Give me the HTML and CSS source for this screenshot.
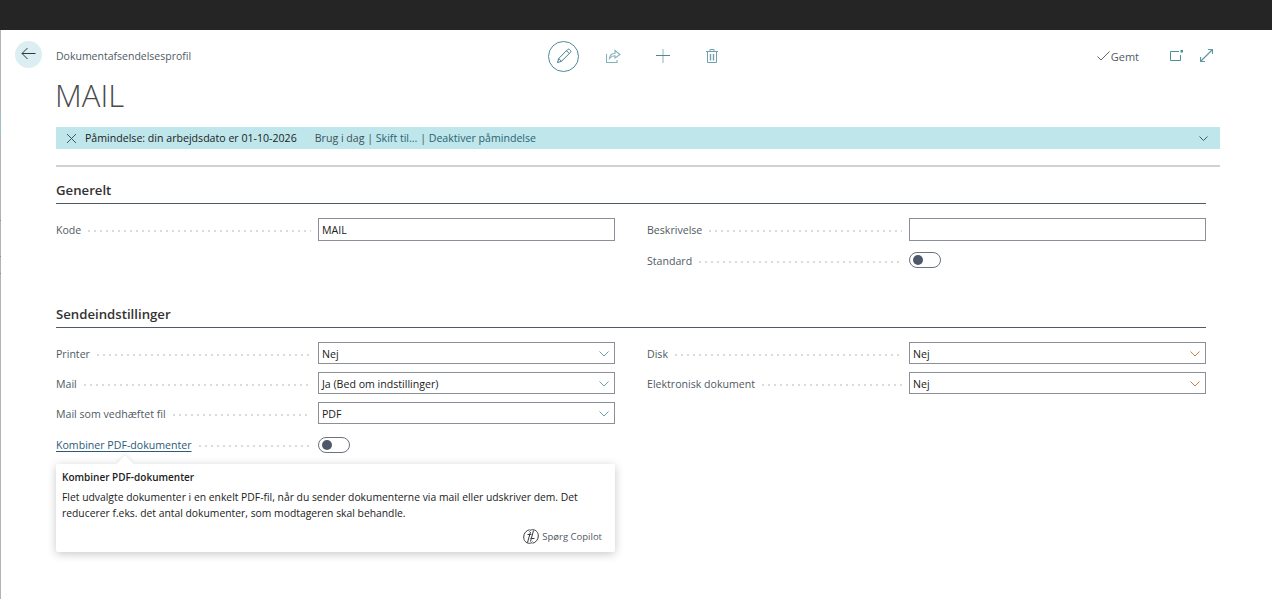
FILE: index.html
```html
<!DOCTYPE html>
<html lang="da">
<head>
    <meta charset="UTF-8">
    <title>Dokumentafsendelsesprofil - MAIL</title>
    <link rel="stylesheet" href="styles.css">
</head>
<body>
    <div class="topbar"></div>
    <div class="page">
        <header class="header">
            <div class="crumb-area">
                <button class="back" aria-label="Tilbage">
                    <svg width="15" height="13" viewBox="0 0 15 13" fill="none" stroke="#2b3a42" stroke-width="1"><path d="M14.500 6.500H1M6.500 1 1 6.500 6.500 12"/></svg>
                </button>
                <span class="crumb">Dokumentafsendelsesprofil</span>
            </div>
            <div class="actions">
                <button class="action action-edit" aria-label="Rediger">
                    <svg width="16" height="16" viewBox="0 0 16 16" fill="none" stroke="#3f7f8c" stroke-width="1"><path d="M1.500 14.500 2.700 10.500 11.600 1.600a1.400 1.400 0 0 1 2 0l.8.8a1.400 1.400 0 0 1 0 2L5.500 13.300z"/><path d="M2.700 10.500 5.500 13.300M10.500 2.700l2.800 2.800"/></svg>
                </button>
                <button class="action" aria-label="Del">
                    <svg width="15" height="14" viewBox="0 0 15 14" fill="none" stroke="#85b2ba" stroke-width="1.100"><path d="M.5 5v8.500h10.500V11"/><path d="M3.500 9.500C3.800 6.500 6 4.500 9 4.500V1.500L14 5.500 9 9V6.800C7 6.800 5 7.500 3.500 9.500z"/></svg>
                </button>
                <button class="action" aria-label="Ny">
                    <svg width="14" height="14" viewBox="0 0 14 14" fill="none" stroke-width="1"><path d="M7 0v14" stroke="#8fb7be"/><path d="M0 6.500h14" stroke="#4f8894"/></svg>
                </button>
                <button class="action" aria-label="Slet">
                    <svg width="12" height="14" viewBox="0 0 12 14" fill="none" stroke="#6fa3ad" stroke-width="1"><path d="M0 2.500h12M4 2.500V.5h4v2M1.500 2.500v11h9v-11"/><path d="M4.500 5v6.500M7.500 5v6.500" stroke-width="1.400"/></svg>
                </button>
            </div>
            <div class="status">
                <span class="saved">
                    <svg width="13" height="10" viewBox="0 0 13 10" fill="none" stroke="#5c6670" stroke-width="1"><path d="M.5 5.500 4 9 12.500.5"/></svg>
                    Gemt
                </span>
                <svg class="open-icon" width="13" height="11" viewBox="0 0 13 11" fill="none" stroke="#4f8f9b" stroke-width="1"><path d="M9 1.500H.5v9h10V5"/><path d="M10.500 0h2.500v2.500h-2.500z" fill="#4f8f9b" stroke="none"/></svg>
                <svg class="expand-icon" width="13" height="13" viewBox="0 0 13 13" fill="none" stroke="#5b98a4" stroke-width="1.200"><path d="M.5 12.500 12.500.5M8 .5h4.500V5M.5 8v4.500H5"/></svg>
            </div>
        </header>

        <h1 class="title">MAIL</h1>

        <div class="banner">
            <svg class="banner-close" width="9" height="9" viewBox="0 0 9 9" fill="none" stroke="#3e5a62" stroke-width="1"><path d="M0 0l9 9M9 0 0 9"/></svg>
            <span class="banner-text">Påmindelse: din arbejdsdato er 01-10-2026</span>
            <span class="banner-links">Brug i dag | <a>Skift til...</a> | <a>Deaktiver påmindelse</a></span>
            <svg class="banner-chevron" width="9" height="5" viewBox="0 0 9 5" fill="none" stroke="#3e5a62" stroke-width="1"><path d="M.5.500l4 4 4-4"/></svg>
        </div>
        <div class="divider"></div>

        <main class="form">
            <section class="section section-general">
                <h2 class="section-title">Generelt</h2>
                <div class="columns">
                    <div class="column">
                        <div class="field field-tall">
                            <label class="label"><span>Kode</span></label>
                            <div class="input">MAIL</div>
                        </div>
                    </div>
                    <div class="column">
                        <div class="field field-tall">
                            <label class="label"><span>Beskrivelse</span></label>
                            <div class="input"></div>
                        </div>
                        <div class="field">
                            <label class="label"><span>Standard</span></label>
                            <div class="toggle"><i></i></div>
                        </div>
                    </div>
                </div>
            </section>

            <section class="section">
                <h2 class="section-title">Sendeindstillinger</h2>
                <div class="columns">
                    <div class="column">
                        <div class="field">
                            <label class="label"><span>Printer</span></label>
                            <div class="input select">Nej<svg class="chevron" width="10" height="6" viewBox="0 0 10 6" fill="none" stroke-width="1"><path d="M.5.500 5 5 9.500.5"/></svg></div>
                        </div>
                        <div class="field">
                            <label class="label"><span>Mail</span></label>
                            <div class="input select">Ja (Bed om indstillinger)<svg class="chevron" width="10" height="6" viewBox="0 0 10 6" fill="none" stroke-width="1"><path d="M.5.500 5 5 9.500.5"/></svg></div>
                        </div>
                        <div class="field">
                            <label class="label"><span>Mail som vedhæftet fil</span></label>
                            <div class="input select">PDF<svg class="chevron" width="10" height="6" viewBox="0 0 10 6" fill="none" stroke-width="1"><path d="M.5.500 5 5 9.500.5"/></svg></div>
                        </div>
                        <div class="field field-popup">
                            <label class="label"><span class="label-link">Kombiner PDF-dokumenter</span></label>
                            <div class="toggle"><i></i></div>
                            <div class="popup">
                                <h3 class="popup-title">Kombiner PDF-dokumenter</h3>
                                <p class="popup-text">Flet udvalgte dokumenter i en enkelt PDF-fil, når du sender dokumenterne via mail eller udskriver dem. Det reducerer f.eks. det antal dokumenter, som modtageren skal behandle.</p>
                                <div class="popup-foot">
                                    <svg width="16" height="15" viewBox="0 0 16 15" fill="none" stroke="#3a3a3a" stroke-width="1"><path d="M6.500 2.500C7 1.200 8 .7 9.500.7c3.500 0 5.800 2.600 5.800 6.300 0 3.800-2.500 6.500-5.800 7.300"/><path d="M9.500 12.500C9 13.800 8 14.300 6.500 14.300 3 14.300.7 11.700.7 8 .7 4.200 3.200 1.500 6.500.7"/><path d="M10.500 1.500 7.500 12.500M7.500 3 4.500 13.500M4.500 5.500h4M7.500 9.500h4"/></svg>
                                    Spørg Copilot
                                </div>
                            </div>
                        </div>
                    </div>
                    <div class="column column-warm">
                        <div class="field">
                            <label class="label"><span>Disk</span></label>
                            <div class="input select">Nej<svg class="chevron" width="10" height="6" viewBox="0 0 10 6" fill="none" stroke-width="1"><path d="M.5.500 5 5 9.500.5"/></svg></div>
                        </div>
                        <div class="field">
                            <label class="label"><span>Elektronisk dokument</span></label>
                            <div class="input select">Nej<svg class="chevron" width="10" height="6" viewBox="0 0 10 6" fill="none" stroke-width="1"><path d="M.5.500 5 5 9.500.5"/></svg></div>
                        </div>
                    </div>
                </div>
            </section>
        </main>
    </div>
</body>
</html>
```

FILE: styles.css
```css
* {
    box-sizing: border-box;
}

html,
body {
    height: 100%;
}

body {
    margin: 0;
    overflow: hidden;
    background: #fff;
    color: #212121;
    font-family: "Open Sans", "Noto Sans", sans-serif;
    font-size: 10.600px;
}

button {
    padding: 0;
    border: 0;
    background: none;
}

.topbar {
    height: 30px;
    background: #252525;
}

/* The strip on the left is the edge of the page behind this one */
.page {
    height: 569px;
    padding: 10px 0 0 1px;
    background: linear-gradient(to bottom,
        #b3b3b3 0, #b3b3b3 85px,
        #9fbfc6 85px, #9fbfc6 108px,
        #b3b3b3 108px, #b3b3b3 190px,
        #8a8a8a 190px, #8a8a8a 191px,
        #b3b3b3 191px, #b3b3b3 226px,
        #8a8a8a 226px, #8a8a8a 227px,
        #b3b3b3 227px, #b3b3b3 243px,
        #8a8a8a 243px, #8a8a8a 244px,
        #b3b3b3 244px) 0 0 / 1px 100% no-repeat;
}

/* Header row */
.header {
    display: flex;
    align-items: center;
    height: 32px;
    padding-left: 14px;
    padding-right: 59px;
}

.crumb-area {
    display: flex;
    align-items: center;
    width: 533px;
}

.back {
    display: flex;
    justify-content: center;
    align-items: center;
    width: 27px;
    height: 27px;
    margin-top: -3px;
    padding-bottom: 3px;
    border-radius: 50%;
    background: #dceef1;
}

.crumb {
    margin-left: 14px;
    color: #505a64;
    font-size: 10.500px;
}

.actions {
    display: flex;
    gap: 18.500px;
}

.action {
    display: flex;
    justify-content: center;
    align-items: center;
    width: 31px;
    height: 31px;
}

.action-edit {
    border: 1px solid #4f8a96;
    border-radius: 50%;
}

.status {
    display: flex;
    align-items: center;
    margin-left: auto;
}

.saved {
    display: flex;
    align-items: center;
    gap: 1px;
    color: #505a64;
    font-size: 11px;
}

.open-icon {
    margin-left: 31px;
    margin-top: -2px;
}

.expand-icon {
    margin-left: 17px;
    margin-top: -2px;
}

.title {
    margin: 4px 0 0 54px;
    color: #4a4a4a;
    font-size: 31px;
    font-weight: 300;
    line-height: 38px;
}

/* Notification banner */
.banner {
    display: flex;
    align-items: center;
    height: 22px;
    margin: 13px 52px 0 55px;
    padding: 0 12px 0 11px;
    background: #bee6eb;
    color: #212121;
}

.banner-text {
    margin-left: 9px;
}

.banner-links {
    margin-left: 18px;
    color: #3e5158;
    white-space: pre;
}

.banner-links a {
    color: #2c6371;
}

.banner-chevron {
    margin-left: auto;
}

.divider {
    height: 2px;
    margin: 16px 52px 0 55px;
    background: #d2d0d4;
}

/* Form */
.form {
    margin: 0 66px 0 55px;
}

.section-general {
    height: 124px;
}

.section-title {
    height: 37px;
    margin: 0;
    padding-top: 14px;
    border-bottom: 1px solid #505a64;
    color: #333;
    font-size: 13.200px;
    font-weight: 600;
    line-height: 18px;
}

.columns {
    display: grid;
    grid-template-columns: 559px 559px;
    gap: 32px;
    padding-top: 14px;
}

.column {
    display: flex;
    flex-direction: column;
    gap: 8px;
}

.field {
    position: relative;
    display: grid;
    grid-template-columns: 262px 297px;
    align-items: center;
    height: 22px;
}

.field-tall {
    height: 23px;
}

.field-popup {
    margin-top: 2px;
}

.label {
    display: flex;
    align-items: center;
    gap: 5px;
    padding: 2px 7px 0 0;
    color: #505a64;
    white-space: nowrap;
}

.field-tall .label,
.field-popup .label {
    padding-top: 0;
}

.label::after {
    content: '';
    flex: 1;
    height: 2px;
    margin-top: 2px;
    background: radial-gradient(circle, #dadada 1px, transparent 1.100px) 0 0 / 6px 2px repeat-x;
}

.label-link {
    color: #2c5a78;
    text-decoration: underline;
    text-underline-offset: 2px;
}

.input {
    display: flex;
    align-items: center;
    justify-content: space-between;
    height: 100%;
    padding: 0 3px;
    border: 1px solid #8a9099;
    background: #fff;
    color: #212121;
}

.select {
    padding: 2px 5px 0 3px;
}

.chevron {
    stroke: #6a9db0;
}

.column-warm .chevron {
    stroke: #c8813f;
}

.toggle {
    display: flex;
    align-items: center;
    width: 32px;
    height: 16px;
    padding-left: 3px;
    border: 1px solid #6b7280;
    border-radius: 8px;
}

.toggle i {
    width: 10px;
    height: 10px;
    border-radius: 50%;
    background: #4f5869;
}

/* Teaching popup under the field */
.popup {
    position: absolute;
    top: 30px;
    left: 0;
    width: 559px;
    height: 88px;
    padding: 6px 13px 0 6px;
    background: #fff;
    border-radius: 2px;
    box-shadow: 0 2px 10px rgba(0, 0, 0, 0.22);
}

.popup::before {
    content: '';
    position: absolute;
    top: -6px;
    left: 63px;
    width: 12px;
    height: 12px;
    background: #fff;
    transform: rotate(45deg);
    box-shadow: -2px -2px 4px rgba(0, 0, 0, 0.06);
}

.popup-title {
    position: relative;
    margin: 0 0 4px;
    color: #212121;
    font-size: 10px;
    font-weight: 600;
    line-height: 15px;
}

.popup-text {
    margin: 0;
    color: #212121;
    font-size: 10.350px;
    line-height: 16px;
}

.popup-foot {
    display: flex;
    justify-content: flex-end;
    align-items: center;
    gap: 3px;
    margin-top: 8px;
    color: #505a64;
    font-size: 9.500px;
}
```
